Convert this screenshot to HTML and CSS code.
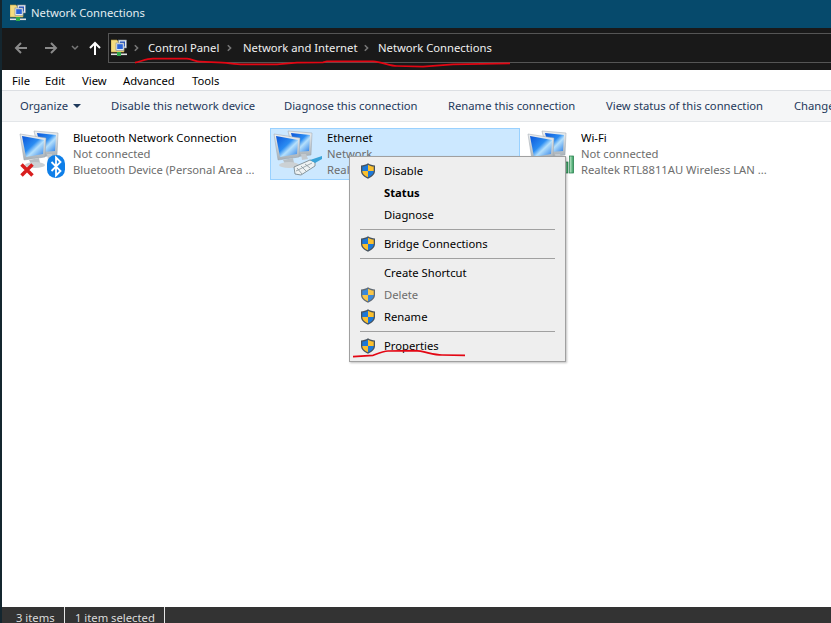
FILE: index.html
```html
<!DOCTYPE html>
<html lang="en">
<head>
<meta charset="utf-8">
<title>Network Connections</title>
<link rel="stylesheet" href="styles.css">
</head>
<body>
<svg class="defs" width="0" height="0" aria-hidden="true">
  <defs>
    <linearGradient id="scr" x1="0" y1="0" x2="1" y2="1"><stop offset="0" stop-color="#0b55d8"/><stop offset=".45" stop-color="#2a8cf2"/><stop offset=".62" stop-color="#b5e0fc"/><stop offset="1" stop-color="#2a7fe8"/></linearGradient>
    <linearGradient id="bez" x1="0" y1="0" x2="0" y2="1"><stop offset="0" stop-color="#eef1f3"/><stop offset="1" stop-color="#a6afb6"/></linearGradient>
    <linearGradient id="bar" x1="0" y1="0" x2="1" y2="0"><stop offset="0" stop-color="#c5ecd0"/><stop offset="1" stop-color="#2f9a5b"/></linearGradient>
    <symbol id="pcs" viewBox="0 0 48 48">
      <path d="M16 1 L40 3 L39 25 L22 27 Z" fill="url(#bez)" stroke="#9aa3aa" stroke-width=".5"/>
      <path d="M19 3 L38 5 L37 21 L24 22 Z" fill="url(#scr)"/>
      <path d="M29 24 l5 0 l2 5 l-6 1 Z" fill="#c3c9ce"/>
      <path d="M2 4 L28 8 L27 27 L6 30 Z" fill="url(#bez)" stroke="#9aa3aa" stroke-width=".5"/>
      <path d="M4 6 L26 10 L25 24 L8 27 Z" fill="url(#scr)"/>
      <path d="M11 30 l10 -2 l1 5 l-9 1 Z" fill="#b8bfc4"/>
      <ellipse cx="17" cy="35" rx="10" ry="3" fill="#ccd1d4"/>
    </symbol>
    <symbol id="shield" viewBox="0 0 16 16">
      <path d="M8 .3 C6 1.800 3.500 2.400 1 2.400 V8 C1 11.500 4.200 14.200 8 15.700 C11.800 14.200 15 11.500 15 8 V2.400 C12.500 2.400 10 1.800 8 .3 Z" fill="#46525e"/>
      <path d="M8 1.700 C6.300 2.900 4.200 3.500 2.300 3.600 V8 H8 Z" fill="#1c78d8"/>
      <path d="M8 1.700 C9.700 2.900 11.800 3.500 13.700 3.600 V8 H8 Z" fill="#fbc02d"/>
      <path d="M2.300 8 H8 V14.300 C5 13 2.300 11 2.300 8 Z" fill="#fbc02d"/>
      <path d="M13.700 8 H8 V14.300 C11 13 13.700 11 13.700 8 Z" fill="#1c78d8"/>
    </symbol>
    <symbol id="folder" viewBox="0 0 16 18">
      <path d="M0 1 H6 L7 2.500 H13 V13 H0 Z" fill="#f5dc80" stroke="#b59a3c" stroke-width=".6"/>
      <rect x="7.500" y="1" width="8" height="8" fill="#e6ebf0" stroke="#7d8794" stroke-width=".6"/>
      <rect x="9" y="2.500" width="5" height="5" fill="#1d4fc4"/>
      <rect x="5" y="4" width="8" height="7.500" fill="#e6ebf0" stroke="#7d8794" stroke-width=".6"/>
      <rect x="6.200" y="5.200" width="5.600" height="4.800" fill="#2a63d8"/>
      <rect x="0" y="14.500" width="16" height="1.600" fill="#e4e4e4"/>
      <rect x="6" y="13" width="4" height="4" fill="#2faa4a"/>
    </symbol>
  </defs>
</svg>
<div class="window">
  <header class="titlebar">
    <svg class="title-icon"><use href="#folder"/></svg>
    <span class="title-text">Network Connections</span>
  </header>
  <nav class="navbar">
    <svg class="nav-icon back" viewBox="0 0 16 16"><path d="M14 8 H3 M8 3 L3 8 L8 13" fill="none" stroke="#8a8a8a" stroke-width="2"/></svg>
    <svg class="nav-icon fwd" viewBox="0 0 16 16"><path d="M2 8 H13 M8 3 L13 8 L8 13" fill="none" stroke="#8a8a8a" stroke-width="2"/></svg>
    <svg class="nav-caret" viewBox="0 0 8 8"><path d="M1 2 L4 5 L7 2" fill="none" stroke="#777" stroke-width="1.500"/></svg>
    <svg class="nav-icon up" viewBox="0 0 16 16"><path d="M8 15 V3 M3 8 L8 3 L13 8" fill="none" stroke="#fff" stroke-width="2"/></svg>
    <div class="address">
      <svg class="addr-icon"><use href="#folder"/></svg>
      <svg class="chev c0" viewBox="0 0 6 10"><path d="M1.500 1.500 L5 5 L1.500 8.500" fill="none" stroke="#777" stroke-width="2"/></svg>
      <span class="crumb c1">Control Panel</span>
      <svg class="chev" viewBox="0 0 6 10"><path d="M1.500 1.500 L5 5 L1.500 8.500" fill="none" stroke="#777" stroke-width="2"/></svg>
      <span class="crumb c2">Network and Internet</span>
      <svg class="chev c3" viewBox="0 0 6 10"><path d="M1.500 1.500 L5 5 L1.500 8.500" fill="none" stroke="#777" stroke-width="2"/></svg>
      <span class="crumb">Network Connections</span>
    </div>
  </nav>
  <div class="menubar">
    <span class="m-file">File</span><span class="m-edit">Edit</span><span class="m-view">View</span><span class="m-adv">Advanced</span><span>Tools</span>
  </div>
  <div class="toolbar">
    <span class="t-org">Organize<i class="caret"></i></span>
    <span class="t-dis">Disable this network device</span>
    <span class="t-dia">Diagnose this connection</span>
    <span class="t-ren">Rename this connection</span>
    <span class="t-view">View status of this connection</span>
    <span>Change settings of this connection</span>
  </div>
  <main class="content">
    <div class="item">
      <svg class="item-icon" viewBox="0 0 48 48">
        <use href="#pcs" width="48" height="48"/>
        <path d="M3.500 34.500 L14.500 45.500 M14.500 34.500 L3.500 45.500" stroke="#d81e1e" stroke-width="3.500"/>
        <rect x="29" y="25" width="18" height="23" rx="8.500" fill="#0f7fe8"/>
        <path d="M33.500 32 L42.500 41 L38 45.500 V27.500 L42.500 32 L33.500 41" fill="none" stroke="#fff" stroke-width="1.800"/>
      </svg>
      <div class="item-text">
        <div class="name">Bluetooth Network Connection</div>
        <div>Not connected</div>
        <div>Bluetooth Device (Personal Area ...</div>
      </div>
    </div>
    <div class="item selected">
      <svg class="item-icon" viewBox="0 0 48 48">
        <use href="#pcs" width="48" height="48"/>
        <path d="M22 37 L38 30 L43 32 L43 36 L29 45 L23 44 Z" fill="#eef2f3" stroke="#6f7d84" stroke-width=".8"/>
        <path d="M25 38 L30 44 M29 36 L34 41 M33 34 L38 38 M24 41 L40 33" stroke="#87949a" stroke-width=".8" fill="none"/>
        <path d="M38 30 L50 26 L50 29 L43 33 Z" fill="#3aa3d8"/>
      </svg>
      <div class="item-text">
        <div class="name">Ethernet</div>
        <div>Network</div>
        <div>Realtek PCIe GbE Family Controller</div>
      </div>
    </div>
    <div class="item">
      <svg class="item-icon" viewBox="0 0 48 48">
        <use href="#pcs" width="48" height="48"/>
        <g fill="url(#bar)" stroke="#1f7a45" stroke-width=".7"><rect x="32" y="38" width="3.500" height="5"/><rect x="38" y="32" width="4" height="11"/><rect x="43.500" y="26" width="4" height="17"/></g>
      </svg>
      <div class="item-text">
        <div class="name">Wi-Fi</div>
        <div>Not connected</div>
        <div>Realtek RTL8811AU Wireless LAN ...</div>
      </div>
    </div>
  </main>
  <footer class="statusbar">
    <span class="s1">3 items</span><span class="s2">1 item selected</span>
  </footer>
</div>
<div class="context-menu">
  <div class="mi"><svg class="shield"><use href="#shield"/></svg>Disable</div>
  <div class="mi bold">Status</div>
  <div class="mi">Diagnose</div>
  <div class="sep"></div>
  <div class="mi"><svg class="shield"><use href="#shield"/></svg>Bridge Connections</div>
  <div class="sep"></div>
  <div class="mi">Create Shortcut</div>
  <div class="mi disabled"><svg class="shield faded"><use href="#shield"/></svg>Delete</div>
  <div class="mi"><svg class="shield"><use href="#shield"/></svg>Rename</div>
  <div class="sep"></div>
  <div class="mi"><svg class="shield"><use href="#shield"/></svg>Properties</div>
</div>
<svg class="scribbles" viewBox="0 0 831 623" aria-hidden="true">
  <path d="M135 62.700 C142 61 147 58.700 153 58.700 L187 58.700 C192 59 196 61.700 200 61.700 L217 62.300 C226 62.500 235 64.300 243 64.300 L277 64.300 L297 62.700 L323 62.300 L327 61.300 L373 61.300 C382 62 390 66 397 66 L423 66.700 L453 64.300 L510 63.300"/>
  <path d="M353 356.700 L373 355.300 C379 353 384 351 388 351 L415 350.700 C424 351 433 355 442 355 L465 355.300"/>
</svg>
</body>
</html>
```
FILE: styles.css
```css
* { box-sizing: border-box; }
html, body { margin: 0; height: 100%; overflow: hidden; }
body {
  position: relative;
  width: 831px;
  height: 623px;
  font-family: "Noto Sans", "Open Sans", sans-serif;
  font-size: 11.25px;
  line-height: 16px;
  color: #000;
  background: #fff;
}
.defs { position: absolute; }
.window {
  display: flex;
  flex-direction: column;
  height: 623px;
  border-left: 2px solid #14262f;
}
.titlebar {
  display: flex;
  align-items: center;
  height: 28px;
  flex: none;
  padding: 0 0 2px 8px;
  background: #064a6c;
  color: #e4edf1;
}
.title-icon { width: 16px; height: 18px; margin-right: 5px; }
.navbar {
  display: flex;
  align-items: center;
  height: 42px;
  flex: none;
  padding: 0 0 2px 11px;
  background: #191919;
}
.nav-icon { width: 16px; height: 16px; flex: none; }
.fwd { margin-left: 14px; }
.nav-caret { width: 8px; height: 8px; margin-left: 12px; flex: none; }
.up { margin-left: 8px; }
.address {
  display: flex;
  align-items: center;
  flex: 1;
  height: 30px;
  margin-left: 5px;
  padding-left: 2px;
  border: 1px solid #555;
  border-right: 0;
  color: #f0f0f0;
  white-space: nowrap;
}
.addr-icon { width: 16px; height: 18px; margin-right: 6px; flex: none; }
.chev { width: 6px; height: 8px; flex: none; margin-right: 11px; }
.chev.c0 { margin-right: 9px; }
.chev.c3 { margin-right: 9px; }
.crumb.c1 { width: 78px; }
.crumb.c2 { width: 120px; }
.menubar {
  display: flex;
  align-items: center;
  height: 21px;
  flex: none;
  padding: 1px 0 0 10px;
  background: #fff;
  border-bottom: 1px solid #dcdfe3;
}
.m-file { width: 33px; }
.m-edit { width: 37px; }
.m-view { width: 41px; }
.m-adv { width: 69px; }
.toolbar {
  display: flex;
  align-items: center;
  height: 31px;
  flex: none;
  padding-left: 18px;
  background: #f5f6f7;
  border-bottom: 1px solid #e3e6e9;
  color: #1e395b;
  white-space: nowrap;
  overflow: hidden;
}
.toolbar span { flex: none; }
.caret {
  display: inline-block;
  margin-left: 5px;
  vertical-align: 2px;
  border: 4px solid transparent;
  border-top: 4px solid #1e395b;
  border-bottom: 0;
}
.t-org { width: 91px; }
.t-dis { width: 173px; }
.t-dia { width: 164px; }
.t-ren { width: 158px; }
.t-view { width: 188px; }
.content {
  flex: 1;
  display: flex;
  gap: 4px;
  padding: 6px 0 0 14px;
  background: #fff;
  overflow: hidden;
  align-items: flex-start;
}
.item {
  display: flex;
  flex: none;
  width: 250px;
  height: 52px;
  padding: 1px 0 0 1px;
  border: 1px solid transparent;
  color: #6d6d6d;
  white-space: nowrap;
}
.item.selected { background: #cce8ff; border-color: #99d1ff; }
.item-icon { width: 48px; height: 48px; flex: none; margin-right: 7px; overflow: visible; }
.item-text { min-width: 0; overflow: hidden; }
.name { color: #000; }
.statusbar {
  display: flex;
  height: 16px;
  flex: none;
  padding-left: 14px;
  background: #333;
  color: #dcdcdc;
  line-height: 22px;
  white-space: nowrap;
  overflow: hidden;
}
.statusbar span { flex: none; height: 16px; border-right: 1px solid #e6e6e6; }
.s1 { width: 49px; margin-right: 10px; }
.s2 { width: 90px; }
.context-menu {
  position: absolute;
  left: 349px;
  top: 156px;
  width: 217px;
  height: 206px;
  padding: 3px 10px 0 2px;
  background: #eee;
  border: 1px solid #a0a0a0;
  box-shadow: 1px 1px 2px rgba(0,0,0,.25);
}
.mi {
  position: relative;
  height: 22px;
  line-height: 21px;
  padding-left: 32px;
  white-space: nowrap;
}
.mi.bold { font-weight: bold; }
.mi.disabled { color: #6d6d6d; }
.shield { position: absolute; left: 8px; top: 3px; width: 16px; height: 16px; }
.shield.faded { opacity: .85; }
.sep { height: 1px; margin: 3px 0 3px 8px; background: #a0a0a0; }
.scribbles { position: absolute; inset: 0; width: 831px; height: 623px; pointer-events: none; }
.scribbles path { fill: none; stroke: #e30613; stroke-width: 1.700; }
```
